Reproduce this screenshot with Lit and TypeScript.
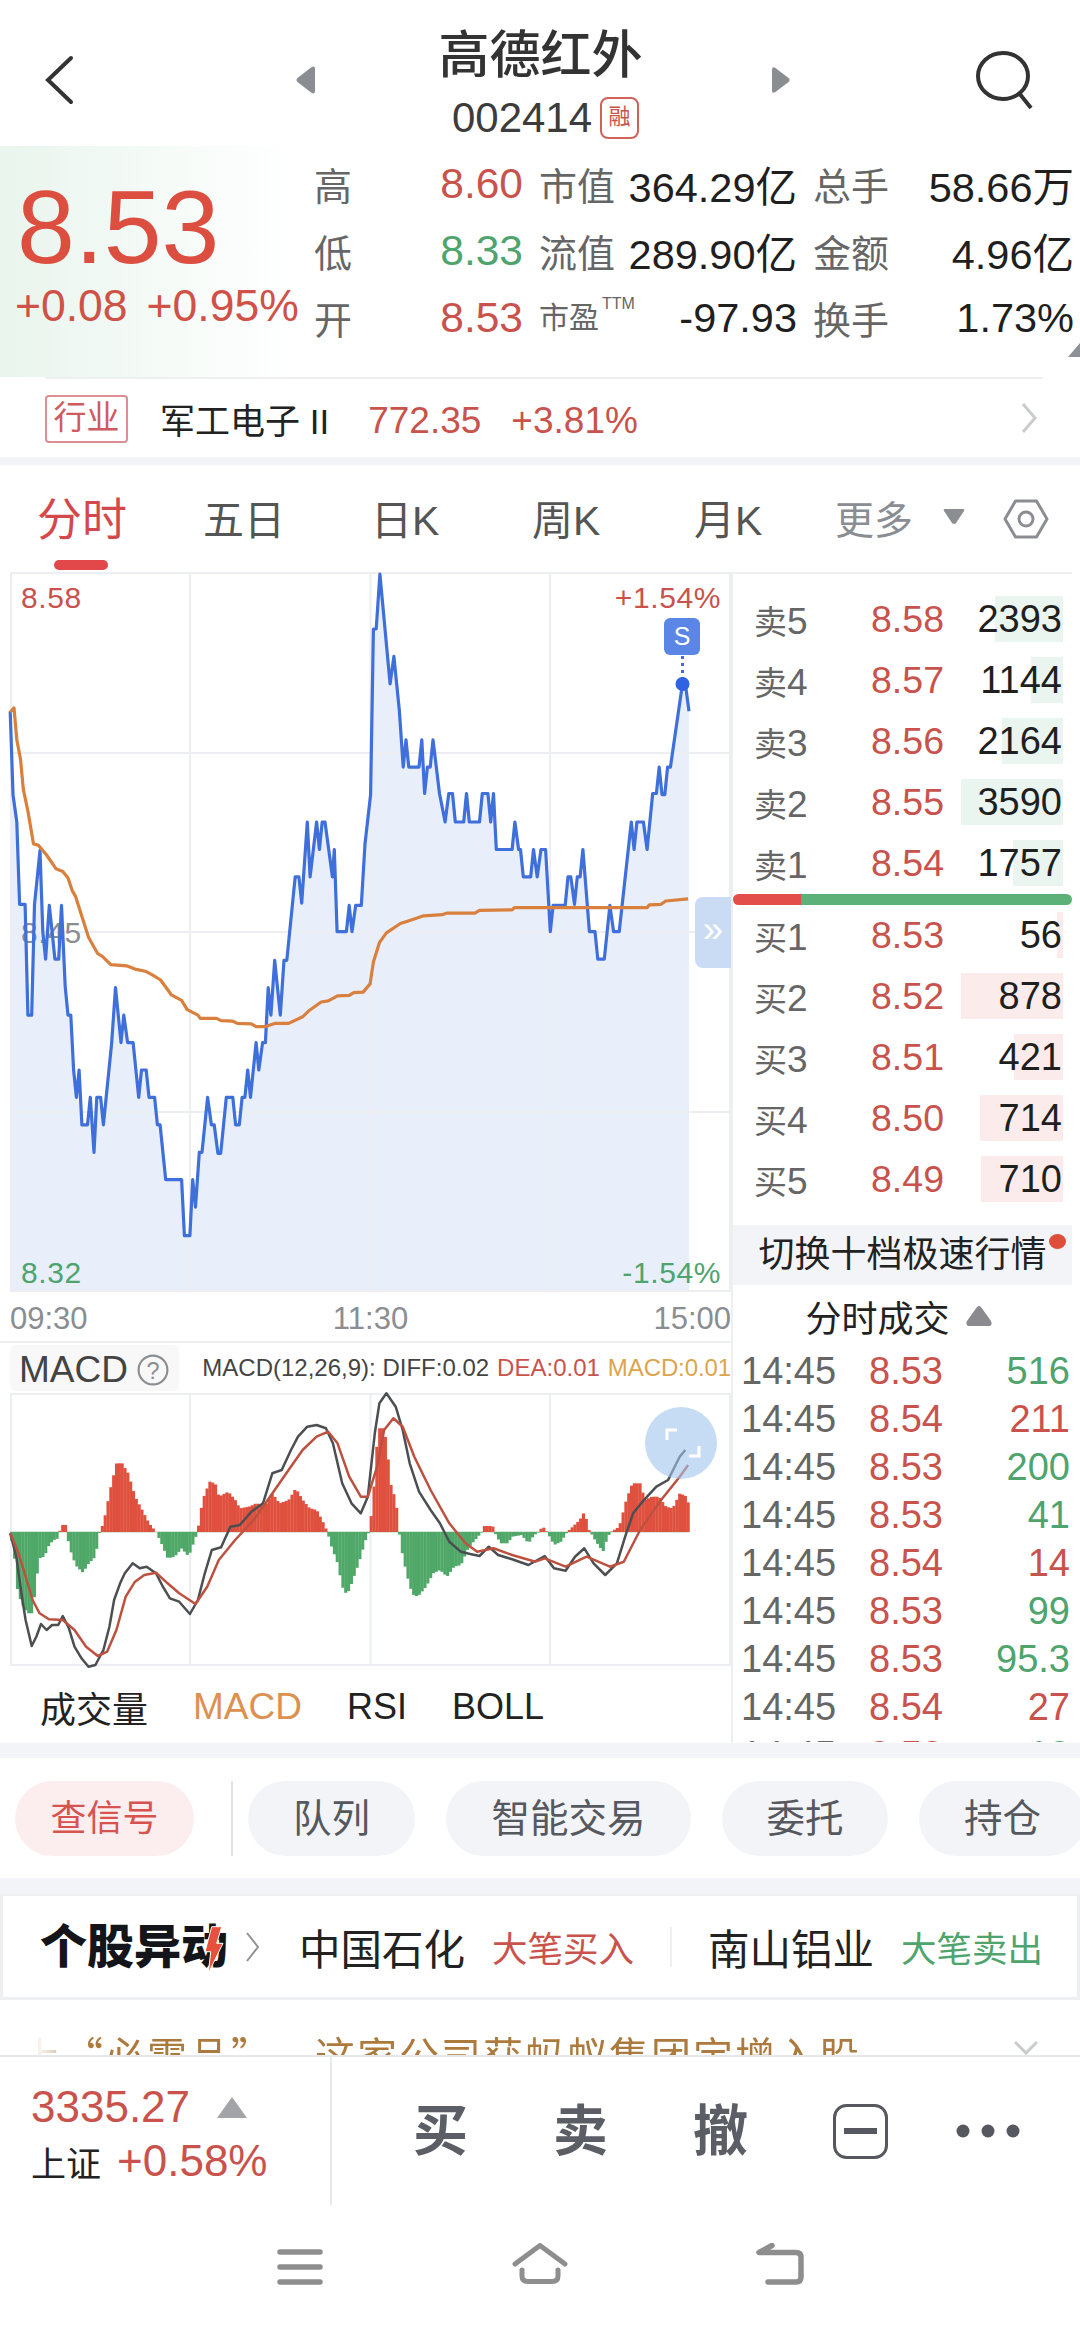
import { LitElement, html, css, svg } from 'lit';
import { customElement } from 'lit/decorators.js';

type Pt = [number, number];

// traced from the reference, in the crop coordinates of the chart area
const PRICE: Pt[] = [[22,458],[28,610],[36,660],[42,810],[54,810],[60,1012],[68,1012],[74,810],[86,712],[92,860],[98,910],[106,812],[112,860],[118,910],[126,910],[132,812],[140,960],[146,1012],[152,1012],[158,1112],[164,1162],[170,1112],[176,1212],[188,1212],[194,1162],[202,1262],[208,1162],[216,1162],[222,1212],[240,1062],[248,962],[260,1062],[266,1012],[274,1062],[286,1062],[298,1162],[304,1112],[314,1112],[320,1162],[332,1162],[338,1212],[344,1212],[356,1312],[390,1312],[396,1414],[408,1414],[414,1312],[420,1362],[428,1262],[434,1262],[446,1162],[454,1212],[460,1212],[468,1264],[474,1264],[486,1162],[500,1162],[506,1212],[514,1212],[520,1162],[526,1162],[532,1112],[538,1162],[550,1062],[556,1112],[564,1062],[570,1062],[576,962],[582,1012],[590,912],[602,1012],[610,912],[616,912],[634,760],[642,760],[648,808],[660,660],[666,760],[680,660],[686,710],[692,660],[698,660],[714,760],[718,710],[724,860],[744,860],[750,812],[756,860],[764,812],[776,812],[784,700],[796,610],[802,308],[808,308],[816,208],[838,408],[846,358],[858,458],[866,560],[872,510],[878,560],[900,560],[906,510],[912,608],[918,560],[924,560],[930,510],[944,608],[956,660],[964,608],[972,608],[978,660],[996,660],[1002,608],[1008,660],[1030,660],[1036,608],[1048,608],[1054,660],[1060,608],[1066,710],[1100,710],[1106,660],[1114,710],[1118,710],[1124,760],[1140,760],[1146,710],[1154,760],[1162,710],[1172,710],[1182,860],[1188,812],[1214,812],[1220,760],[1226,760],[1234,810],[1240,760],[1246,760],[1252,710],[1266,860],[1278,860],[1284,910],[1298,910],[1310,812],[1318,860],[1330,860],[1356,660],[1362,710],[1368,660],[1382,660],[1390,710],[1402,608],[1410,608],[1416,560],[1422,610],[1428,610],[1434,560],[1440,560],[1466,408],[1472,408],[1480,458]];

const AVG: Pt[] = [[22,460],[30,452],[36,510],[44,545],[50,600],[60,640],[72,700],[82,702],[100,720],[120,745],[135,750],[146,762],[155,785],[162,795],[190,870],[200,885],[210,900],[220,905],[238,920],[272,922],[290,928],[312,932],[330,940],[345,948],[368,975],[390,985],[402,1002],[425,1012],[430,1018],[465,1018],[475,1022],[500,1023],[510,1027],[540,1028],[550,1033],[570,1033],[590,1027],[620,1027],[650,1015],[665,1003],[690,988],[705,986],[725,977],[750,976],[760,971],[780,970],[795,955],[802,915],[815,880],[830,862],[860,845],[885,838],[910,831],[950,829],[960,826],[1020,826],[1030,821],[1100,820],[1105,816],[1390,816],[1395,811],[1420,810],[1430,804],[1478,800]];

const HIST: Pt[] = [[22,700],[30,760],[38,880],[50,920],[60,940],[70,940],[76,860],[84,775],[95,770],[105,735],[115,720],[125,715],[128,696],[130,675],[142,675],[143,696],[145,715],[155,770],[165,800],[178,818],[190,790],[205,770],[212,700],[216,696],[225,650],[238,560],[250,490],[262,490],[275,520],[290,590],[305,630],[320,670],[335,696],[345,725],[360,775],[375,770],[390,745],[405,770],[415,730],[424,696],[435,600],[450,545],[462,550],[470,590],[490,575],[505,600],[515,625],[535,620],[550,610],[570,615],[585,580],[600,610],[620,600],[635,565],[650,600],[665,625],[680,630],[695,670],[703,696],[712,740],[725,790],[735,860],[745,885],[755,850],[770,790],[785,720],[792,696],[800,620],[812,385],[825,385],[832,460],[840,560],[850,600],[857,696],[865,770],[880,860],[890,890],[900,885],[915,860],[930,820],[945,810],[960,830],[975,800],[990,795],[1005,745],[1020,720],[1035,696],[1039,678],[1058,678],[1062,696],[1075,730],[1090,730],[1100,710],[1120,705],[1135,730],[1147,705],[1158,696],[1165,678],[1175,696],[1190,735],[1205,725],[1218,696],[1230,680],[1245,660],[1255,635],[1265,690],[1268,696],[1280,725],[1295,755],[1305,710],[1312,696],[1330,680],[1345,600],[1358,550],[1375,550],[1385,600],[1400,590],[1415,590],[1430,620],[1445,625],[1460,580],[1475,590],[1480,620]];

const DIFF: Pt[] = [[22,700],[35,770],[45,870],[55,960],[68,1038],[78,1010],[88,972],[100,990],[112,975],[125,975],[135,948],[148,985],[160,1040],[175,1075],[190,1100],[205,1095],[222,1050],[235,980],[245,900],[258,850],[268,820],[285,790],[300,805],[315,800],[335,820],[350,860],[365,895],[385,905],[408,942],[425,900],[440,820],[455,750],[475,742],[495,680],[515,675],[540,635],[565,610],[585,520],[605,510],[625,450],[640,410],[660,380],[680,375],[700,385],[715,430],[735,550],[755,610],[775,640],[790,590],[805,400],[815,310],[830,280],[850,320],[865,390],[880,490],[900,575],[925,630],[945,670],[965,725],[990,755],[1010,762],[1030,768],[1050,740],[1070,765],[1100,778],[1135,795],[1170,768],[1190,805],[1215,812],[1235,770],[1255,745],[1275,790],[1300,825],[1325,790],[1345,700],[1360,640],[1380,605],[1410,560],[1435,540],[1460,470],[1472,450]];

const DEA: Pt[] = [[22,700],[40,760],[55,830],[70,900],[85,940],[105,958],[135,960],[160,990],[185,1040],[210,1068],[230,1055],[250,990],[270,890],[290,845],[310,825],[335,818],[360,850],[385,880],[420,912],[445,860],[470,780],[505,720],[545,660],[590,570],[620,510],[650,450],[680,410],[705,395],[725,430],[750,530],[775,590],[790,590],[810,500],[825,390],[845,355],[865,380],[890,470],[925,570],[965,670],[1000,730],[1025,755],[1060,745],[1100,765],[1150,785],[1170,775],[1215,800],[1260,770],[1310,800],[1340,785],[1375,690],[1420,600],[1460,530],[1478,495]];

const px = (x: number) => x / 2.148 - 10;
const priceY = (y: number) => y / 1.823 - 112;
const macdY = (y: number) => y / 3 - 93;

const line = (pts: Pt[], fy: (y: number) => number) =>
  pts.map(([x, y]) => `${px(x).toFixed(1)},${fy(y).toFixed(1)}`).join(' ');

const envelope = (x: number) => {
  for (let i = 1; i < HIST.length; i++) {
    const [x0, y0] = HIST[i - 1];
    const [x1, y1] = HIST[i];
    if (x <= x1) return y0 + ((y1 - y0) * (x - x0)) / (x1 - x0 || 1);
  }
  return HIST[HIST.length - 1][1];
};

const SELLS = [
  ['卖5', '8.58', '2393', 68],
  ['卖4', '8.57', '1144', 32],
  ['卖3', '8.56', '2164', 61],
  ['卖2', '8.55', '3590', 102],
  ['卖1', '8.54', '1757', 50],
] as const;

const BUYS = [
  ['买1', '8.53', '56', 6],
  ['买2', '8.52', '878', 102],
  ['买3', '8.51', '421', 49],
  ['买4', '8.50', '714', 83],
  ['买5', '8.49', '710', 82],
] as const;

const TICKS = [
  ['8.53', '516', 'green'],
  ['8.54', '211', 'red'],
  ['8.53', '200', 'green'],
  ['8.53', '41', 'green'],
  ['8.54', '14', 'red'],
  ['8.53', '99', 'green'],
  ['8.53', '95.3', 'green'],
  ['8.54', '27', 'red'],
  ['8.53', '12', 'green'],
];

@customElement('app-root')
class AppRoot extends LitElement {
  static styles = css`
    :host {
      display: block;
      width: 1080px;
      height: 2328px;
      overflow: hidden;
      background: #fff;
      font-family: 'Liberation Sans', 'Noto Sans CJK SC', sans-serif;
      color: #222;
    }
    .red { color: #c9534c; }
    .green { color: #4fa46d; }
    .band { background: #f2f4f8; }

    .head {
      display: grid;
      grid-template-columns: 296px 19px 1fr 18px 290px;
      height: 146px;
      align-items: center;
    }
    .head svg { display: block; }
    .title { align-self: start; text-align: center; padding-top: 27px; }
    .title h1 {
      margin: 0;
      padding-right: 6px;
      font-size: 51px;
      line-height: 58px;
      font-weight: 500;
      color: #333;
    }
    .code {
      display: flex;
      justify-content: center;
      align-items: center;
      gap: 8px;
      margin-top: 11px;
      font-size: 42px;
      line-height: 44px;
      color: #3c3c3c;
      padding-left: 4px;
    }
    .rong {
      width: 39px;
      height: 42px;
      border: 2px solid #d0625c;
      border-radius: 8px;
      box-sizing: border-box;
      font-size: 22px;
      line-height: 36px;
      text-align: center;
      color: #c9534c;
    }

    .quote {
      position: relative;
      display: flex;
      height: 231px;
      background: linear-gradient(90deg, #e9f5ed 0, #f6fbf8 170px, #fff 295px);
    }
    .now { width: 314px; padding: 31px 0 0 17px; box-sizing: border-box; }
    .big { font-size: 104px; line-height: 100px; color: #dc4f40; }
    .chg {
      display: flex;
      gap: 19px;
      font-size: 44.500px;
      line-height: 46px;
      margin-top: 6px;
      margin-left: -2px;
      color: #cf5147;
      white-space: nowrap;
    }
    .stats {
      display: grid;
      grid-template-columns: 36px 173px 90px 184px 93px 184px;
      grid-auto-rows: 67px;
      align-items: center;
      padding-top: 4px;
      font-size: 41.500px;
      white-space: nowrap;
    }
    .stats .k { font-size: 38px; color: #666; }
    .stats .g { padding-left: 16px; }
    .stats .v { text-align: right; color: #1f1f1f; }
    .stats .p { text-align: right; font-size: 42.500px; }
    .pe { display: flex; align-items: flex-start; }
    .pe b { font-weight: 400; font-size: 30px; line-height: 46px; }
    .pe sup { font-size: 16px; line-height: 16px; margin: 1px 0 0 3px; }
    .corner {
      position: absolute;
      right: 0;
      bottom: 20px;
      border-left: 12px solid transparent;
      border-bottom: 14px solid #8d9095;
    }

    .sector {
      display: flex;
      align-items: center;
      height: 78px;
      margin: 0 37px 0 45px;
      border-top: 2px solid #eeeff1;
      font-size: 35px;
      white-space: nowrap;
    }
    .tag {
      width: 83px;
      height: 48px;
      margin-top: 2px;
      box-sizing: border-box;
      border: 2px solid #dc8f92;
      border-radius: 4px;
      color: #cf5b60;
      font-size: 33px;
      line-height: 42px;
      text-align: center;
      margin-right: 32px;
    }
    .sector .num { margin-left: 39px; padding-top: 5px; font-size: 37px; }
    .sector .num + .num { margin-left: 30px; }
    .sector svg { margin-left: auto; margin-right: 6px; }

    .tabs {
      display: grid;
      grid-template-columns: 166px 168px 161px 162px 141px 108px 61px 45px;
      align-items: center;
      height: 107px;
      padding-left: 37px;
      box-sizing: border-box;
      font-size: 41px;
      color: #555;
      margin-top: 8px;
      padding-bottom: 4px;
    }
    .tabs .on { position: relative; font-size: 45px; color: #d4484c; }
    .tabs .on::after {
      content: '';
      position: absolute;
      left: 17px;
      top: 76px;
      width: 54px;
      height: 10px;
      border-radius: 5px;
      background: #e2474a;
    }
    .tabs .more { color: #8a8d92; font-size: 39px; }
    .tabs .hex { margin: 4px 0 0 -1px; }

    .main { display: grid; grid-template-columns: 731px 349px; height: 1171px; }
    .left { min-width: 0; }
    .plot { position: relative; margin-left: 10px; height: 720px; }
    .plot svg { display: block; width: 721px; height: 720px; overflow: visible; }
    .axis { font-size: 30px; letter-spacing: 0.6px; }
    .handle {
      position: absolute;
      right: 0;
      top: 325px;
      width: 36px;
      height: 71px;
      background: #c9dcf4;
      border-radius: 8px 0 0 8px;
      color: #fff;
      font-size: 36px;
      line-height: 66px;
      text-align: center;
    }
    .times {
      display: flex;
      justify-content: space-between;
      height: 51px;
      padding: 4px 0 0 10px;
      align-items: center;
      font-size: 31px;
      color: #8a8d92;
      border-bottom: 2px solid #eeeff1;
      box-sizing: border-box;
    }
    .mhead { display: flex; align-items: center; height: 50px; white-space: nowrap; }
    .mname {
      display: flex;
      align-items: center;
      gap: 9px;
      width: 170px;
      height: 46px;
      margin-left: 10px;
      padding: 3px 0 0 9px;
      box-sizing: border-box;
      background: #f8f8f8;
      border-radius: 6px;
      font-size: 37px;
      color: #444;
    }
    .params { display: flex; gap: 8px; margin-left: 23px; font-size: 24px; color: #444; }
    .params .y { color: #dca54c; letter-spacing: -0.1px; }
    .macd { position: relative; margin-left: 10px; height: 273px; }
    .macd > svg { display: block; width: 721px; height: 273px; overflow: visible; }
    .expand {
      position: absolute;
      left: 635px;
      top: 14px;
      width: 72px;
      height: 72px;
      border-radius: 50%;
      background: rgba(160, 196, 236, 0.6);
    }
    .expand svg { display: block; }
    .subs {
      display: flex;
      align-items: center;
      gap: 45px;
      height: 77px;
      padding: 4px 0 0 40px;
      font-size: 36px;
      color: #222;
      box-sizing: border-box;
    }
    .subs .on { color: #dd9150; font-size: 37px; }

    .right { border-left: 2px solid #eeeff1; box-sizing: border-box; min-width: 0; }
    .book { width: 339px; border-top: 2px solid #eeeff1; padding-top: 15px; box-sizing: border-box; }
    .lvl {
      position: relative;
      display: grid;
      grid-template-columns: 110px 80px 118px;
      align-items: center;
      height: 61px;
      padding-left: 21px;
      font-size: 37.500px;
    }
    .lvl .k { font-size: 33px; color: #666; }
    .lvl .k span { font-size: 37px; }
    .lvl .p { text-align: right; white-space: nowrap; }
    .lvl .v { position: relative; text-align: right; color: #1f1f1f; font-size: 38px; }
    .lvl i {
      position: absolute;
      right: 9px;
      top: 7px;
      height: 46px;
    }
    .lvl i.s { background: #e9f5ee; }
    .lvl i.b { background: #fbeceb; }
    .split {
      height: 11px;
      border-radius: 6px;
      background: linear-gradient(90deg, #e34d4a 68px, #5cb179 68px);
    }
    .swap {
      position: relative;
      height: 60px;
      margin-top: 15px;
      background: #f2f4f8;
      font-size: 36px;
      line-height: 60px;
      text-align: center;
      color: #222;
    }
    .swap::after {
      content: '';
      position: absolute;
      right: 6px;
      top: 9px;
      width: 17px;
      height: 15px;
      border-radius: 50%;
      background: #dd4f3b;
    }
    .flow {
      display: flex;
      justify-content: center;
      align-items: center;
      gap: 16px;
      width: 339px;
      height: 62px;
      font-size: 36px;
      padding-right: 8px;
      box-sizing: border-box;
    }
    .ticks { height: 395px; overflow: hidden; }
    .tick {
      display: grid;
      grid-template-columns: 96px 106px 127px;
      align-items: center;
      height: 48px;
      padding-left: 8px;
      font-size: 38px;
    }
    .tick .t { color: #666; }
    .tick .p, .tick .n { text-align: right; }

    .actions {
      display: flex;
      align-items: center;
      height: 120px;
      padding: 0 0 0 15px;
      border-top: 15px solid #f2f4f8;
      border-bottom: 16px solid #f2f4f8;
      box-sizing: content-box;
      overflow: hidden;
      font-size: 38.500px;
      white-space: nowrap;
    }
    .pill {
      flex: none;
      height: 75px;
      line-height: 75px;
      text-align: center;
      border-radius: 38px;
      background: #f2f4f8;
      color: #55585e;
      margin-right: 31px;
    }
    .pill.hot { width: 179px; background: #fceeee; color: #d75350; margin-right: 37px; font-size: 36px; }
    .sep { flex: none; width: 2px; height: 75px; background: #e2e3e6; margin-right: 15px; }

    .movers {
      display: flex;
      align-items: center;
      height: 106px;
      box-sizing: border-box;
      border: 3px solid #eeeff1;
      border-top-width: 2px;
      padding-left: 37px;
      white-space: nowrap;
    }
    .logo {
      position: relative;
      width: 188px;
      font-size: 47px;
      line-height: 56px;
      font-weight: 900;
      color: #14151a;
    }
    .logo svg { position: absolute; left: 160px; top: 1px; }
    .stock { display: flex; align-items: center; gap: 27px; font-size: 41.500px; }
    .stock small { font-size: 35.500px; }
    .vbar { width: 2px; height: 40px; background: #eeeff1; margin: 0 36px 0 36px; }

    .news { position: relative; height: 55px; overflow: hidden; white-space: nowrap; }
    .news p {
      margin: 24px 0 0 21px;
      font-family: 'Noto Sans CJK SC', sans-serif;
      font-size: 40px;
      line-height: 60px;
      letter-spacing: 2px;
      text-spacing-trim: space-all;
      color: #ad7a3e;
      -webkit-mask-image: linear-gradient(90deg, rgba(0, 0, 0, 0.1) 20px, #000 70px);
      mask-image: linear-gradient(90deg, rgba(0, 0, 0, 0.1) 20px, #000 70px);
    }
    .news svg { position: absolute; left: 1014px; top: 41px; }

    .dock { display: flex; height: 150px; border-top: 2px solid #e7e8ea; box-sizing: border-box; }
    .index {
      width: 332px;
      border-right: 2px solid #e7e8ea;
      box-sizing: border-box;
      padding: 26px 0 0 31px;
    }
    .index .row { display: flex; align-items: center; white-space: nowrap; }
    .index .val { font-size: 44px; line-height: 48px; }
    .index .up {
      margin-left: 27px;
      border-left: 15px solid transparent;
      border-right: 15px solid transparent;
      border-bottom: 21px solid #a3a4a7;
    }
    .index .name { font-size: 35px; margin-right: 16px; color: #222; }
    .index .pct { font-size: 44px; line-height: 52px; }
    .trade { display: flex; align-items: center; padding-left: 81px; }
    .trade b {
      font-size: 55px;
      line-height: 60px;
      font-weight: 700;
      color: #5b5e64;
      margin-right: 85px;
    }
    .trade svg { flex: none; display: block; }

    .nav { display: flex; align-items: flex-start; padding: 38px 0 0 277px; gap: 188.500px; }
    .nav svg { display: block; fill: none; stroke: #8e8e8e; stroke-linecap: round; stroke-linejoin: round; }
  `;

  private priceChart() {
    const pts = line(PRICE, priceY);
    const last = px(1480).toFixed(1);
    const first = px(22).toFixed(1);
    const grid = '#eceef2';
    return svg`
      <svg viewBox="0 0 721 720">
        <polygon points="${first},720 ${pts} ${last},720" fill="#e8effb"/>
        <path d="M0 1H721M0 181H721M0 360H721M0 540H721M0 719H721M180 0V720M360.500 0V720M540 0V720M1 0V720M720 0V720" stroke="${grid}" stroke-width="2" fill="none"/>
        <text class="axis" x="11" y="36" fill="#c9534c">8.58</text>
        <text class="axis" x="11" y="371" fill="#8a8d92">8.45</text>
        <text class="axis" x="11" y="711" fill="#4fa46d">8.32</text>
        <polyline points="${pts}" fill="none" stroke="#3f6fdb" stroke-width="3.200" stroke-linejoin="round"/>
        <polyline points="${line(AVG, priceY)}" fill="none" stroke="#d9803f" stroke-width="3.200" stroke-linejoin="round"/>
        <text class="axis" x="711" y="36" text-anchor="end" fill="#c9534c">+1.54%</text>
        <text class="axis" x="711" y="711" text-anchor="end" fill="#4fa46d">-1.54%</text>
        <line x1="672.500" y1="84" x2="672.500" y2="108" stroke="#3f6fdb" stroke-width="3" stroke-dasharray="3 4"/>
        <rect x="654" y="46" width="36" height="37" rx="6" fill="#5b86e6"/>
        <text x="672" y="73" text-anchor="middle" font-size="25" fill="#fff">S</text>
        <ellipse cx="672.500" cy="112" rx="7" ry="7" fill="#2f63e2"/>
      </svg>
    `;
  }

  private macdChart() {
    const bars = [];
    const step = 2.83;
    for (let x = 22; x < 1480; x += step * 2.148) {
      const y = envelope(x + 3);
      const up = y < 696;
      const top = macdY(Math.min(y, 696));
      const h = Math.abs(y - 696) / 3;
      bars.push(svg`<rect x="${px(x).toFixed(2)}" y="${top.toFixed(1)}" width="${step + 0.3}" height="${h.toFixed(1)}" fill="${up ? '#e0503e' : '#4fa868'}"/>`);
    }
    return svg`
      <svg viewBox="0 0 721 273">
        <path d="M0 1H721M0 272H721M1 0V273M180 0V273M360.500 0V273M540 0V273M720 0V273" stroke="#eceef2" stroke-width="2" fill="none"/>
        <line x1="0" y1="139" x2="679" y2="139" stroke="#a9d6b8" stroke-width="1"/>
        ${bars}
        <polyline points="${line(DIFF, macdY)}" fill="none" stroke="#4c4f52" stroke-width="2.500" stroke-linejoin="round"/>
        <polyline points="${line(DEA, macdY)}" fill="none" stroke="#bd5140" stroke-width="2.500" stroke-linejoin="round"/>
      </svg>
    `;
  }

  private level(row: readonly [string, string, string, number], kind: string) {
    return html`
      <div class="lvl">
        <i class=${kind} style="width:${row[3]}px"></i>
        <div class="k">${row[0].slice(0, 1)}<span>${row[0].slice(1)}</span></div>
        <div class="p red">${row[1]}</div>
        <div class="v">${row[2]}</div>
      </div>
    `;
  }

  render() {
    return html`
      <div class="head">
        <svg width="296" height="60" viewBox="0 0 296 60" style="margin-top:14px">
          <polyline points="71,8 48,30 71,52" fill="none" stroke="#333" stroke-width="4" stroke-linecap="round"/>
        </svg>
        <svg width="19" height="28" viewBox="0 0 19 28" style="margin-top:14px">
          <path d="M15 1.500Q19 -1 19 3V25Q19 29 15 26.500L1.500 16Q-0.500 14 1.500 12Z" fill="#8a8d92"/>
        </svg>
        <div class="title">
          <h1>高德红外</h1>
          <div class="code">002414<span class="rong">融</span></div>
        </div>
        <svg width="18" height="28" viewBox="0 0 19 28" style="margin-top:14px">
          <path d="M4 1.500Q0 -1 0 3V25Q0 29 4 26.500L17.500 16Q19.500 14 17.500 12Z" fill="#8a8d92"/>
        </svg>
        <svg width="290" height="62" viewBox="0 0 290 62" style="margin-top:13px">
          <ellipse cx="213" cy="27" rx="25" ry="23" fill="none" stroke="#333" stroke-width="4"/>
          <line x1="229" y1="44" x2="241" y2="59" stroke="#333" stroke-width="4"/>
        </svg>
      </div>

      <div class="quote">
        <div class="now">
          <div class="big">8.53</div>
          <div class="chg"><span>+0.08</span><span>+0.95%</span></div>
        </div>
        <div class="stats">
          <span class="k">高</span><span class="p red">8.60</span>
          <span class="k g">市值</span><span class="v">364.29亿</span>
          <span class="k g">总手</span><span class="v">58.66万</span>
          <span class="k">低</span><span class="p green">8.33</span>
          <span class="k g">流值</span><span class="v">289.90亿</span>
          <span class="k g">金额</span><span class="v">4.96亿</span>
          <span class="k">开</span><span class="p red">8.53</span>
          <span class="k g pe"><b>市盈</b><sup>TTM</sup></span><span class="v">-97.93</span>
          <span class="k g">换手</span><span class="v">1.73%</span>
        </div>
        <div class="corner"></div>
      </div>

      <div class="sector">
        <span class="tag">行业</span>
        <span>军工电子 II</span>
        <span class="num red">772.35</span>
        <span class="num red">+3.81%</span>
        <svg width="16" height="30" viewBox="0 0 16 30">
          <polyline points="2,1 14,15 2,29" fill="none" stroke="#c9cbce" stroke-width="3"/>
        </svg>
      </div>

      <div class="band" style="height:8px;margin-bottom:-8px"></div>
      <div class="tabs">
        <div class="on">分时</div>
        <div>五日</div>
        <div>日K</div>
        <div>周K</div>
        <div>月K</div>
        <div class="more">更多</div>
        <svg width="22" height="16" viewBox="0 0 22 16"><path d="M2 0H20Q22 0 21 2L13 14Q11 16 9 14L1 2Q0 0 2 0Z" fill="#8a8d92"/></svg>
        <svg class="hex" width="46" height="40" viewBox="0 0 46 40">
          <path d="M12.500 2H33.500L44 20 33.500 38H12.500L2 20Z" fill="none" stroke="#8a8d92" stroke-width="3" stroke-linejoin="round"/>
          <circle cx="23" cy="20" r="7" fill="none" stroke="#8a8d92" stroke-width="3"/>
        </svg>
      </div>

      <div class="main">
        <div class="left">
          <div class="plot">
            ${this.priceChart()}
            <div class="handle">»</div>
          </div>
          <div class="times"><span>09:30</span><span>11:30</span><span>15:00</span></div>
          <div class="mhead">
            <div class="mname">
              MACD
              <svg width="32" height="32" viewBox="0 0 30 30" style="flex:none">
                <circle cx="15" cy="15" r="13.500" fill="none" stroke="#8a8d92" stroke-width="2"/>
                <text x="15" y="23" text-anchor="middle" font-size="22" fill="#8a8d92">?</text>
              </svg>
            </div>
            <div class="params">
              <span>MACD(12,26,9): DIFF:0.02</span>
              <span class="red">DEA:0.01</span>
              <span class="y">MACD:0.01</span>
            </div>
          </div>
          <div class="macd">
            ${this.macdChart()}
            <div class="expand">
              <svg width="72" height="72" viewBox="0 0 72 72">
                <path d="M22 33V23H32M54 39V49H44" fill="none" stroke="#fff" stroke-width="3"/>
              </svg>
            </div>
          </div>
          <div class="subs">
            <span>成交量</span>
            <span class="on">MACD</span>
            <span>RSI</span>
            <span>BOLL</span>
          </div>
        </div>

        <div class="right">
          <div class="book">
            ${SELLS.map((r) => this.level(r, 's'))}
            <div class="split"></div>
            ${BUYS.map((r) => this.level(r, 'b'))}
            <div class="swap">切换十档极速行情</div>
          </div>
          <div class="flow">
            分时成交
            <svg width="26" height="20" viewBox="0 0 26 20"><path d="M11 1Q13 -1 15 1L25 15Q27 20 22 20H4Q-1 20 1 15Z" fill="#8a8a8f"/></svg>
          </div>
          <div class="ticks">
            ${TICKS.map(
              ([p, n, c]) => html`
                <div class="tick">
                  <span class="t">14:45</span>
                  <span class="p red">${p}</span>
                  <span class="n ${c}">${n}</span>
                </div>
              `,
            )}
          </div>
        </div>
      </div>

      <div class="actions">
        <div class="pill hot">查信号</div>
        <div class="sep"></div>
        <div class="pill" style="width:167px">队列</div>
        <div class="pill" style="width:245px">智能交易</div>
        <div class="pill" style="width:166px">委托</div>
        <div class="pill" style="width:167px">持仓</div>
      </div>

      <div class="movers">
        <div class="logo">
          个股异动
          <svg width="30" height="60" viewBox="0 0 30 60">
            <polygon points="11.700,6.700 21.700,6.700 16.700,23.300 23,23.300 8.300,53.300 10.700,31.700 5,31.700" fill="#e8503e" stroke="#fff" stroke-width="1"/>
          </svg>
        </div>
        <svg width="14" height="30" viewBox="0 0 14 30" style="margin:0 39px 0 18px">
          <polyline points="1,1 12,15 1,29" fill="none" stroke="#8f9195" stroke-width="2"/>
        </svg>
        <div class="stock"><span>中国石化</span><small class="red">大笔买入</small></div>
        <div class="vbar"></div>
        <div class="stock"><span>南山铝业</span><small class="green">大笔卖出</small></div>
      </div>

      <div class="news">
        <p>上“必需品”，这家公司获蚂蚁集团定增入股</p>
        <svg width="24" height="14" viewBox="0 0 24 14"><polyline points="1,1 12,12 23,1" fill="none" stroke="#c9cbce" stroke-width="3"/></svg>
      </div>

      <div class="dock">
        <div class="index">
          <div class="row"><span class="val red">3335.27</span><span class="up"></span></div>
          <div class="row" style="margin-top:4px"><span class="name">上证</span><span class="pct red">+0.58%</span></div>
        </div>
        <div class="trade">
          <b>买</b><b>卖</b><b>撤</b>
          <svg width="55" height="55" viewBox="0 0 55 55" style="margin-right:68px">
            <rect x="1.500" y="1.500" width="52" height="52" rx="12" fill="none" stroke="#55585e" stroke-width="3"/>
            <rect x="11" y="24" width="33" height="6" fill="#55585e"/>
          </svg>
          <svg width="64" height="14" viewBox="0 0 64 14">
            <circle cx="7" cy="7" r="6.500" fill="#55585e"/>
            <circle cx="32" cy="7" r="6.500" fill="#55585e"/>
            <circle cx="57" cy="7" r="6.500" fill="#55585e"/>
          </svg>
        </div>
      </div>

      <div class="nav">
        <svg width="46" height="44" viewBox="0 0 46 44" stroke-width="5.500">
          <path d="M3 9H43M3 24H43M3 39H43"/>
        </svg>
        <svg width="56" height="44" viewBox="0 0 56 44" stroke-width="5">
          <path d="M3 21 28 2.500 53 21"/>
          <path d="M10 27V33Q10 38.500 16 38.500H40Q46 38.500 46 33V27"/>
        </svg>
        <svg width="48" height="44" viewBox="0 0 48 44" stroke-width="5.500">
          <path d="M16 2.500 3 9.500H40Q45 9.500 45 14V34Q45 39 40 39H12"/>
        </svg>
      </div>
    `;
  }
}
